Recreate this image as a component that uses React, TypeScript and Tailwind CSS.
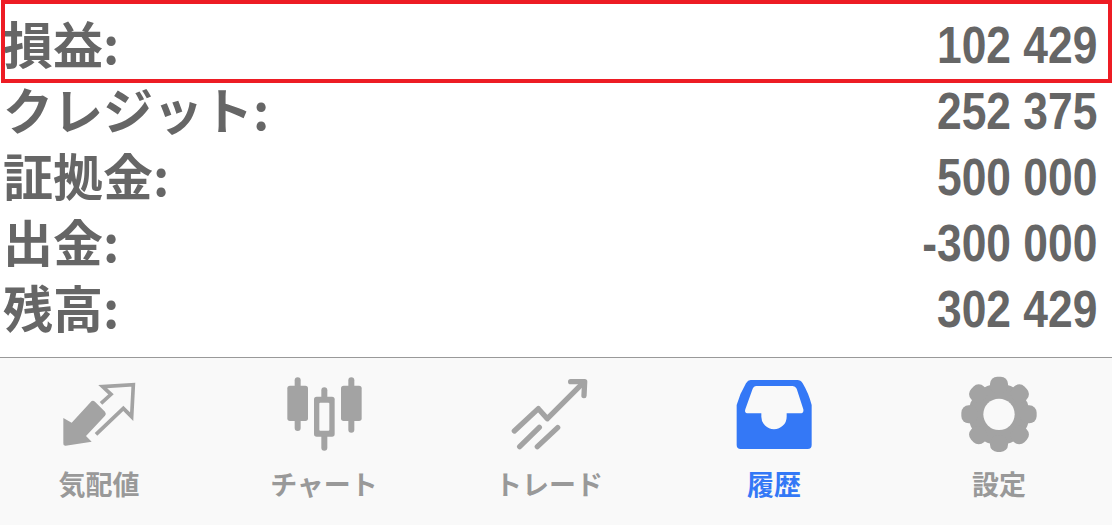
const rows: [string, string][] = [
  ["損益:", "102 429"],
  ["クレジット:", "252 375"],
  ["証拠金:", "500 000"],
  ["出金:", "-300 000"],
  ["残高:", "302 429"],
];

const GREY = "#a3a3a3";
const BG = "#f9f9f9";

function QuotesIcon() {
  return (
    <svg width="78" height="78" viewBox="180 75 234 234">
      <path d="M190 204 L215 218 L275 153 Q280 150 285 155 L315 185 Q320 192 315 197 L258 258 L275 275 L197 287 Q189 288 190 280 Z" fill={GREY} />
      <path d="M303 160 L333 133 L308 110 L400 104 L395 200 L370 175 L288 253" fill="none" stroke={GREY} strokeWidth="11" />
    </svg>
  );
}

function ChartIcon() {
  return (
    <svg width="78" height="78" viewBox="855 75 234 234">
      <g fill={GREY}>
        <rect x="884" y="82" width="18" height="161" rx="9" />
        <rect x="862" y="107" width="62" height="106" rx="8" />
        <rect x="1045" y="82" width="18" height="166" rx="9" />
        <rect x="1023" y="107" width="62" height="106" rx="8" />
        <rect x="964" y="112" width="18" height="190" rx="9" />
        <rect x="942" y="140" width="62" height="120" rx="8" />
      </g>
      <rect x="958" y="158" width="30" height="84" rx="3" fill={BG} />
    </svg>
  );
}

function TradeIcon() {
  return (
    <svg width="78" height="78" viewBox="180 75 234 234">
      <g fill="none" stroke={GREY} strokeWidth="16" strokeLinecap="round" strokeLinejoin="round">
        <path d="M193 243 L265 176 L292 206 L400 98" />
        <path d="M362 95 L404 95 L402 137" />
        <path d="M209 290 L268 232" />
        <path d="M262 290 L323 233" />
      </g>
    </svg>
  );
}

function HistoryIcon() {
  return (
    <svg width="78" height="78" viewBox="105 75 234 234">
      <path
        fillRule="evenodd"
        fill="#3478f6"
        d="M152 90 H292 Q302 90 308 100 Q326 130 335 165 V285 Q335 297 323 297 H122 Q110 297 110 285 V165 Q120 130 138 100 Q144 90 152 90 Z M168 108 H278 Q286 108 290 116 L310 178 Q312 190 300 190 H260 V200 A38 38 0 0 1 184 200 V190 H145 Q132 190 136 178 L158 116 Q161 108 168 108 Z"
      />
    </svg>
  );
}

function SettingsIcon() {
  const angles = [0, 45, 90, 135, 180, 225, 270, 315];
  return (
    <svg width="78" height="78" viewBox="780 75 234 234">
      <g transform="translate(897 193)" fill={GREY}>
        <circle r="92" />
        {angles.map((a) => (
          <rect key={a} x="-27" y="-113" width="54" height="50" rx="22" transform={`rotate(${a})`} />
        ))}
        <circle r="47" fill={BG} />
      </g>
    </svg>
  );
}

const tabs = [
  { label: "気配値", icon: <QuotesIcon />, active: false },
  { label: "チャート", icon: <ChartIcon />, active: false },
  { label: "トレード", icon: <TradeIcon />, active: false },
  { label: "履歴", icon: <HistoryIcon />, active: true },
  { label: "設定", icon: <SettingsIcon />, active: false },
];

export default function App() {
  return (
    <div className="relative flex h-[525px] w-[1112px] flex-col overflow-hidden bg-white font-['Noto_Sans_CJK_JP',sans-serif]">
      <div className="flex h-[357px] flex-col pl-[3px] pr-[15px] pt-[9px]">
        {rows.map(([label, value]) => (
          <div key={label} className="flex h-[66px] items-center justify-between text-[50px] font-bold leading-none text-[#666666]">
            <span>{label}</span>
            <span className="inline-block origin-right scale-x-[0.87] pt-[7px] font-['Liberation_Sans',sans-serif] text-[51px]">{value}</span>
          </div>
        ))}
      </div>
      <div className="absolute left-px right-0 top-0 h-[83px] border-4 border-[#ed1c24]" />
      <div className="flex flex-1 justify-between border-t border-[#999999] bg-[#f9f9f9] pl-6 pr-[38px] pt-[17px]">
        {tabs.map((t) => (
          <div key={t.label} className="flex w-[150px] flex-col items-center">
            {t.icon}
            <span className={`mt-[13px] text-[27px] font-bold leading-[36px] ${t.active ? "text-[#3478f6]" : "text-[#999999]"}`}>
              {t.label}
            </span>
          </div>
        ))}
      </div>
    </div>
  );
}
